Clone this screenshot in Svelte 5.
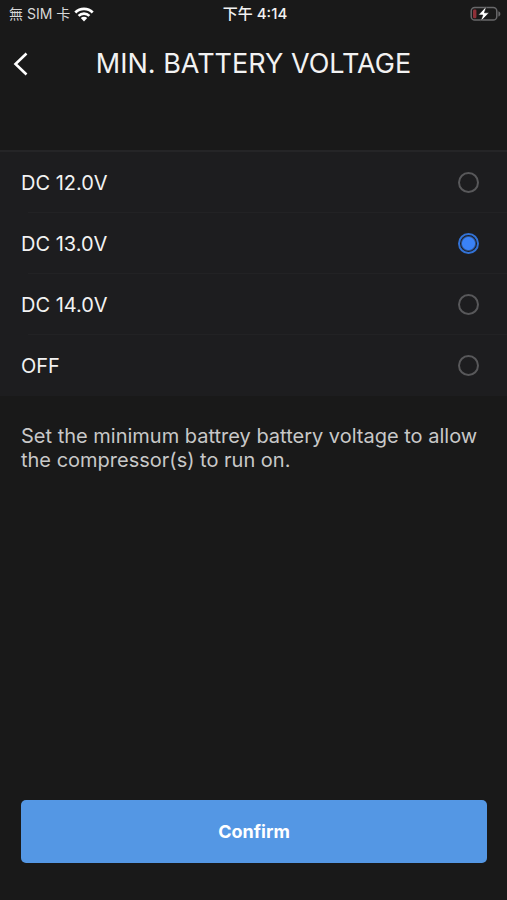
<script>
  const options = ['DC 12.0V', 'DC 13.0V', 'DC 14.0V', 'OFF'];
  let selected = 'DC 13.0V';
</script>

<div class="screen">
  <div class="status-bar">
    <div class="carrier">
      <span>無 SIM 卡</span>
      <svg width="20" height="15" viewBox="0 0 20 15" fill="none" aria-hidden="true">
        <path d="M1.3 5.4a12.4 12.4 0 0 1 17.4 0" stroke="#fff" stroke-width="2.8" />
        <path d="M4.6 8.9a7.6 7.6 0 0 1 10.8 0" stroke="#fff" stroke-width="2.6" />
        <path d="M10 14.5l-3.2-3.4a4.5 4.5 0 0 1 6.4 0z" fill="#fff" />
      </svg>
    </div>
    <span class="time">下午 4:14</span>
    <svg class="battery" width="31" height="16" viewBox="0 0 31 16" aria-hidden="true">
      <rect x="1.2" y="1.5" width="25.6" height="12.6" rx="3.6" fill="none" stroke="#68686a" stroke-width="1.5" />
      <path d="M28.4 5.2c2.6.8 2.6 4.6 0 5.4z" fill="#68686a" />
      <rect x="3" y="3.5" width="3.4" height="8.8" rx="1.2" fill="#8f3038" />
      <path d="M16.6 0L8.4 9h4.4l-2.2 6.6L19 6.8h-4.6z" fill="#fff" stroke="#191919" stroke-width="0.6" />
    </svg>
  </div>

  <header class="header">
    <button class="back" type="button" aria-label="Back">
      <svg width="17" height="24" viewBox="0 0 17 24" fill="none">
        <path d="M14.5 1.5L3.5 12l11 10.5" stroke="#fff" stroke-width="2.6" />
      </svg>
    </button>
    <h1>MIN. BATTERY VOLTAGE</h1>
  </header>

  <main>
    <div class="options" role="radiogroup" aria-label="Minimum battery voltage">
      {#each options as option}
        <label class="option">
          <span>{option}</span>
          <input type="radio" name="voltage" value={option} bind:group={selected} />
        </label>
      {/each}
    </div>
    <p class="hint">
      Set the minimum battrey battery voltage to allow the compressor(s) to run on.
    </p>
  </main>

  <footer class="footer">
    <button class="confirm" type="button">Confirm</button>
  </footer>
</div>

<style>
  :global(body) {
    margin: 0;
    background-color: #191919;
  }

  .screen {
    min-height: 100vh;
    box-sizing: border-box;
    display: flex;
    flex-direction: column;
    background-color: #191919;
    color: #f2f2f2;
    font-family: Inter, 'Noto Sans CJK TC', sans-serif;
  }

  .status-bar {
    display: grid;
    grid-template-columns: 1fr auto 1fr;
    align-items: center;
    height: 28px;
    padding: 0 6px 0 9px;
    font-size: 14px;
    line-height: 20px;
  }

  .carrier {
    display: flex;
    align-items: center;
    gap: 4px;
    color: #d8d8d8;
  }

  .time {
    font-size: 15px;
    font-weight: 500;
  }

  .battery {
    justify-self: end;
  }

  .header {
    display: grid;
    grid-template-columns: 48px 1fr 48px;
    align-items: center;
    height: 72px;
    margin-bottom: 50px;
  }

  .back {
    justify-self: start;
    display: flex;
    padding: 12px;
    border: none;
    background: none;
    cursor: pointer;
  }

  h1 {
    margin: 0;
    font-size: 27px;
    line-height: 36px;
    font-weight: 400;
    text-align: center;
    white-space: nowrap;
  }

  .options {
    border-top: 2px solid #252527;
    background-color: #1d1d1f;
  }

  .option {
    position: relative;
    display: flex;
    align-items: center;
    justify-content: space-between;
    height: 61px;
    padding: 0 28px 0 21px;
    font-size: 20px;
    line-height: 24px;
    cursor: pointer;
  }

  .option:not(:last-child)::after {
    content: '';
    position: absolute;
    right: 0;
    bottom: 0;
    left: 28px;
    height: 1px;
    background-color: #222224;
  }

  input {
    appearance: none;
    width: 21px;
    height: 21px;
    margin: 0;
    border: 2px solid #58585a;
    border-radius: 50%;
    cursor: pointer;
  }

  input:checked {
    border-color: #3272d6;
    background: radial-gradient(circle, #3a82f7 6px, transparent 8px);
  }

  .hint {
    margin: 0;
    padding: 28px 21px;
    color: #c8c8c8;
    font-size: 20px;
    line-height: 24px;
  }

  .footer {
    margin-top: auto;
    padding: 0 20px 37px 21px;
  }

  .confirm {
    width: 100%;
    height: 63px;
    border: none;
    border-radius: 5px;
    background-color: #5497e4;
    color: #fff;
    font-family: inherit;
    font-size: 18px;
    font-weight: 700;
    cursor: pointer;
  }
</style>
